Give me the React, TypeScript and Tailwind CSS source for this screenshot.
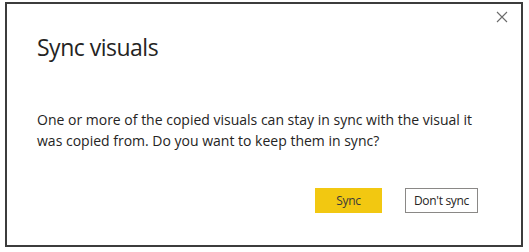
export default function App() {
  return (
    <div className="w-[529px] h-[252px] bg-white pt-[2px] pl-[5px]" style={{ fontFamily: '"Open Sans", "Noto Sans", sans-serif' }}>
      {/* dialog */}
      <div className="relative w-[518px] h-[245px] border-2 border-[#3c3c3c] bg-white pl-[30px] pt-[28px]">
        <button className="absolute right-[13px] top-[7px] w-[12px] h-[12px] flex items-center justify-center">
          <svg width="12" height="12" viewBox="0 0 12 12">
            <path d="M1 1 L11 11 M11 1 L1 11" stroke="#6b6b6b" strokeWidth="1.1" fill="none" />
          </svg>
        </button>

        <h1 className="text-[23px] leading-[30px] text-[#252423] tracking-[-0.5px]">Sync visuals</h1>

        <p className="mt-[47px] text-[14px] leading-[21px] text-[#252423]">
          One or more of the copied visuals can stay in sync with the visual it
          <br />
          was copied from. Do you want to keep them in sync?
        </p>

        <div className="flex justify-end gap-[23px] mt-[37px] pr-[43px]">
          <button className="w-[67px] h-[25px] bg-[#f2c811] text-[12px] text-[#3a3a3a] tracking-[-0.3px]">
            Sync
          </button>
          <button className="w-[73px] h-[25px] border border-[#8a8886] bg-white text-[12px] text-[#252423] tracking-[-0.3px]">
            Don't sync
          </button>
        </div>
      </div>
    </div>
  );
}
